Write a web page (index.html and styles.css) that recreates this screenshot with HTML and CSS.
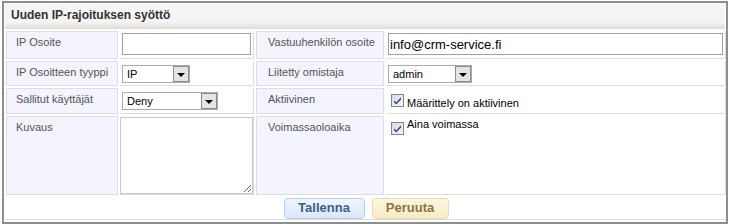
FILE: index.html
```html
<!DOCTYPE html>
<html>
<head>
<meta charset="utf-8">
<link rel="stylesheet" href="styles.css">
</head>
<body>
<div class="panel">
  <div class="head">Uuden IP-rajoituksen syöttö</div>
  <table class="form">
    <tr class="r1">
      <td class="lbl c1">IP Osoite</td>
      <td class="fld c2"><input class="txt ip" type="text"></td>
      <td class="lbl l3 c3">Vastuuhenkilön osoite</td>
      <td class="fld c4"><input class="txt email" type="text" value="info@crm-service.fi"></td>
    </tr>
    <tr class="r2">
      <td class="lbl">IP Osoitteen tyyppi</td>
      <td class="fld"><div class="sel s-ip"><span class="v">IP</span><span class="arrow"></span></div></td>
      <td class="lbl l3">Liitetty omistaja</td>
      <td class="fld"><div class="sel s-admin"><span class="v">admin</span><span class="arrow"></span></div></td>
    </tr>
    <tr class="r3">
      <td class="lbl">Sallitut käyttäjät</td>
      <td class="fld"><div class="sel s-deny"><span class="v">Deny</span><span class="arrow"></span></div></td>
      <td class="lbl l3">Aktiivinen</td>
      <td class="fld">
        <label class="chk chk-a">
          <svg class="box" width="13" height="13" viewBox="0 0 13 13"><defs><linearGradient id="g1" x1="0" y1="0" x2="1" y2="1"><stop offset="0" stop-color="#d8d8e0"/><stop offset="1" stop-color="#f8f8f8"/></linearGradient></defs><rect x="0.5" y="0.5" width="12" height="12" fill="url(#g1)" stroke="#80858f"/><path d="M3 6.2 L5.2 8.6 L10 3.2 L10 5.4 L5.2 10.6 L3 8.2 Z" fill="#2d3f8f"/></svg>
          <span class="t">Määrittely on aktiivinen</span>
        </label>
      </td>
    </tr>
    <tr class="r4">
      <td class="lbl">Kuvaus</td>
      <td class="fld ta"><textarea class="area"></textarea></td>
      <td class="lbl l3">Voimassaoloaika</td>
      <td class="fld">
        <label class="chk chk-b">
          <svg class="box" width="13" height="13" viewBox="0 0 13 13"><defs><linearGradient id="g2" x1="0" y1="0" x2="1" y2="1"><stop offset="0" stop-color="#d8d8e0"/><stop offset="1" stop-color="#f8f8f8"/></linearGradient></defs><rect x="0.5" y="0.5" width="12" height="12" fill="url(#g2)" stroke="#80858f"/><path d="M3 6.2 L5.2 8.6 L10 3.2 L10 5.4 L5.2 10.6 L3 8.2 Z" fill="#2d3f8f"/></svg>
          <span class="t">Aina voimassa</span>
        </label>
      </td>
    </tr>
    <tr class="r5">
      <td class="actions" colspan="4">
        <div class="btns">
          <span class="btn save">Tallenna</span>
          <span class="btn cancel">Peruuta</span>
        </div>
      </td>
    </tr>
  </table>
</div>
</body>
</html>
```

FILE: styles.css
```css
html, body {
  margin: 0;
  padding: 0;
  background: #fff;
}
body {
  font-family: "Liberation Sans", Arial, sans-serif;
  font-size: 11px;
  color: #000;
}
.panel {
  margin: 1px 0 0 2px;
  width: 726px;
  box-sizing: border-box;
  border: 2px solid #8e8e8e;
}
.head {
  margin: 1px 1px 0;
  height: 25px;
  box-sizing: border-box;
  padding: 4px 0 0 6px;
  line-height: 14px;
  font-size: 12px;
  font-weight: bold;
  color: #333;
  background: linear-gradient(to bottom, #f5f5f5 0, #f4f4f4 72%, #dedcd2 100%);
}
.form {
  table-layout: fixed;
  border-collapse: separate;
  border-spacing: 2px;
  width: 724px;
  margin-right: -2px;
}
.form td {
  box-sizing: border-box;
  vertical-align: top;
}
.c1 { width: 112px; }
.c2 { width: 134px; }
.c3 { width: 128px; }
.c4 { width: 340px; }
.r1 td { height: 28px; }
.r2 td { height: 25px; }
.r3 td { height: 26px; }
.r4 td { height: 79px; }
.r5 td { height: 23px; }
.lbl {
  background: #f3f4fd;
  border: 1px solid #dcdde7;
  color: #555;
  padding: 3px 9px 0;
  line-height: 14px;
  white-space: nowrap;
}
.lbl.l3 { padding-left: 11px; }
.fld {
  border-right: 1px solid #dddddd;
  border-bottom: 1px solid #dddddd;
  padding: 2px;
}
.txt {
  display: block;
  box-sizing: border-box;
  height: 22px;
  margin: 0;
  border: 1px solid #a3a3a3;
  padding: 0 1px;
  font-family: "Liberation Sans", Arial, sans-serif;
  font-size: 13px;
  color: #000;
  background: #fff;
  outline: none;
}
.ip { width: 129px; }
.email { width: 335px; }
.sel {
  display: flex;
  box-sizing: border-box;
  height: 18px;
  margin-top: 2px;
  border: 1px solid #a5acb2;
  background: #fff;
}
.s-ip { width: 68px; }
.s-deny { width: 96px; }
.s-admin { width: 84px; }
.sel .v {
  flex: 1;
  padding-left: 4px;
  line-height: 16px;
  font-size: 11px;
  color: #000;
}
.arrow {
  display: flex;
  align-items: center;
  justify-content: center;
  box-sizing: border-box;
  width: 16px;
  height: 16px;
  border: 1px solid #8c8c8c;
  background: #e4e4e4;
}
.arrow::after {
  content: "";
  width: 0;
  height: 0;
  border-left: 4px solid transparent;
  border-right: 4px solid transparent;
  border-top: 4px solid #000;
  margin-top: 1px;
}
.chk {
  display: flex;
  align-items: flex-start;
}
.box {
  display: block;
  flex: none;
  margin-left: 3px;
}
.chk .t {
  margin-left: 3px;
  line-height: 13px;
  color: #000;
}
.chk-a .box { margin-top: 4px; }
.chk-a .t { margin-top: 7px; }
.chk-b .box { margin-top: 4px; }
.chk-b .t { margin-top: 0; }
.fld.ta { padding: 1px 0 0 0; }
.area {
  display: block;
  box-sizing: border-box;
  width: 133px;
  height: 77px;
  margin: 0;
  border: 1px solid #c9c9c9;
  padding: 2px;
  font-family: "Liberation Sans", Arial, sans-serif;
  font-size: 12px;
}
.actions {
  padding: 1px 0 0;
  border-bottom: 1px solid #dddddd;
}
.btns {
  display: flex;
  justify-content: center;
  gap: 7px;
}
.btn {
  display: block;
  box-sizing: border-box;
  height: 21px;
  padding: 0 13px 2px;
  border: 1px solid;
  border-radius: 4px;
  font-size: 13px;
  font-weight: bold;
  line-height: 17px;
}
.save {
  width: 81px;
  text-align: center;
  background: linear-gradient(to bottom, #eff6fd, #d8e8f8);
  border-color: #b6cfe8;
  color: #3d6189;
}
.cancel {
  width: 77px;
  text-align: center;
  background: linear-gradient(to bottom, #fdf7e2, #f8ebc4);
  border-color: #eddcaa;
  color: #8a7446;
}
```
